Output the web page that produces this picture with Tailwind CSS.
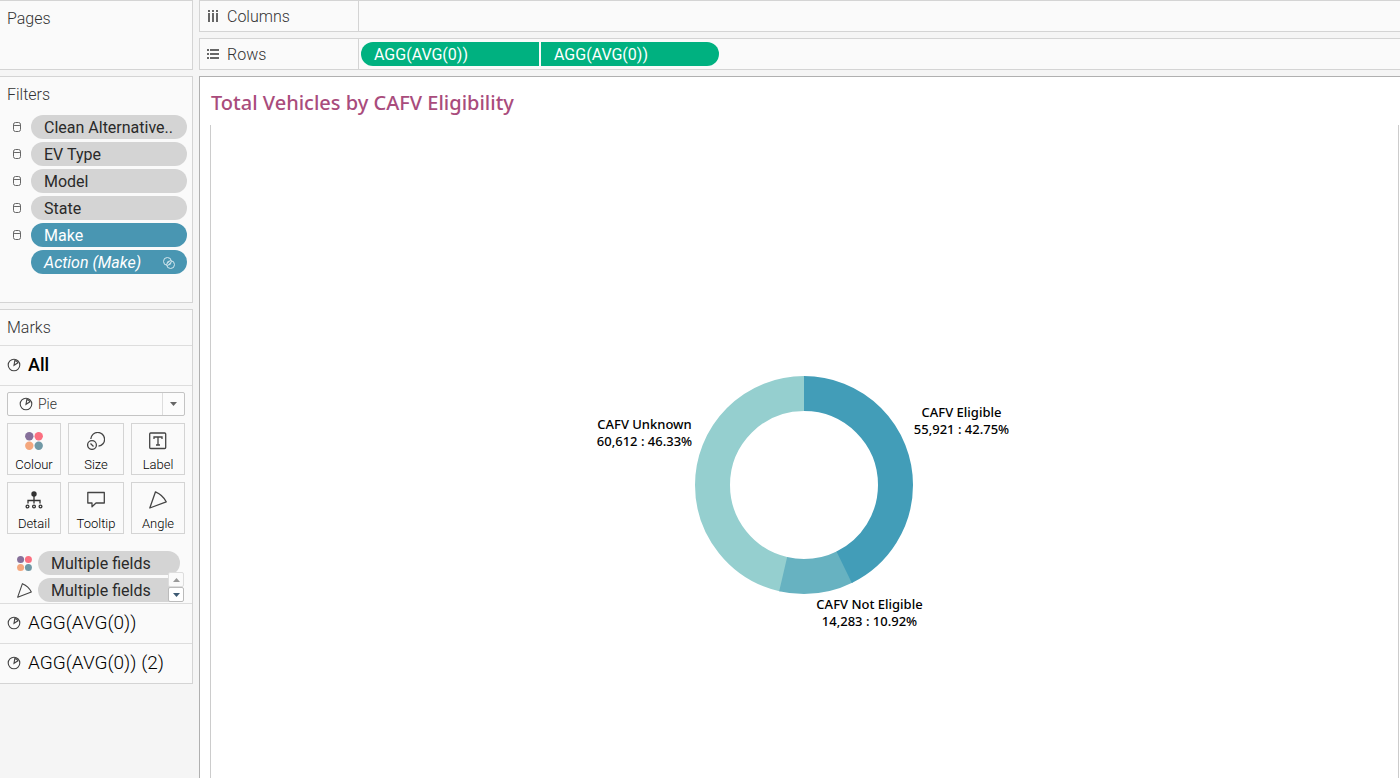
<!DOCTYPE html>
<html lang="en">
<head>
<meta charset="utf-8">
<meta name="viewport" content="width=device-width, initial-scale=1">
<title>Total Vehicles by CAFV Eligibility</title>
<script src="https://cdn.jsdelivr.net/npm/@tailwindcss/browser@4"></script>
</head>
<body class="flex h-screen gap-1.5 overflow-hidden bg-[#f5f5f5] font-['Roboto','Liberation_Sans',sans-serif] text-base text-[#333333]">

<!-- Shared icon shapes -->
<svg class="hidden" aria-hidden="true">
  <symbol id="pie" viewBox="0 0 14 14"><g fill="none" stroke="#444444"><circle cx="7" cy="7" r="5.8" stroke-width="1.1"/><path d="M7 7.300L7.800 2.600Q9.800 2.500 11 4.700Z" stroke-width="1.1"/></g></symbol>
  <symbol id="cylinder" viewBox="0 0 10 12"><g fill="none" stroke="#666666" stroke-width="1"><rect x="1.500" y="1.500" width="7" height="9" rx="2"/><path d="M1.500 3.500q0 1 1.500 1h4q1.500 0 1.500-1"/></g></symbol>
  <symbol id="dots" viewBox="0 0 18 18"><circle cx="4.300" cy="4.300" r="4.200" fill="#86709a"/><circle cx="13.700" cy="4.300" r="4.200" fill="#fb6f80"/><circle cx="4.300" cy="13.700" r="4.200" fill="#f4a77d"/><circle cx="13.700" cy="13.700" r="4.200" fill="#7098a5"/></symbol>
  <symbol id="angle" viewBox="0 0 18 18"><path d="M6.500 .8L.8 17L17.200 10.800Q14 4 6.500 .8Z" fill="none" stroke="#444444" stroke-width="1.300" stroke-linejoin="round"/></symbol>
</svg>

<aside class="flex w-[193px] shrink-0 flex-col gap-1.5" aria-label="Cards">
  <section class="h-[70px] border border-l-0 border-[#d4d4d4] bg-[#fafafa] px-[7px] pt-1.5">
    <h2 class="font-light">Pages</h2>
  </section>

  <section class="h-[227px] border border-l-0 border-[#d4d4d4] bg-[#fafafa] pt-1.5">
    <h2 class="px-[7px] font-light">Filters</h2>
    <ul class="mt-2 flex flex-col gap-[3px] pr-[5px] pl-3 text-[#2a2a2a]">
      <li class="flex items-center gap-[9px]"><svg class="h-3 w-2.5"><use href="#cylinder"/></svg><button class="h-6 flex-1 rounded-full bg-[#d4d4d4] px-[13px] pt-px text-left">Clean Alternative..</button></li>
      <li class="flex items-center gap-[9px]"><svg class="h-3 w-2.5"><use href="#cylinder"/></svg><button class="h-6 flex-1 rounded-full bg-[#d4d4d4] px-[13px] pt-px text-left">EV Type</button></li>
      <li class="flex items-center gap-[9px]"><svg class="h-3 w-2.5"><use href="#cylinder"/></svg><button class="h-6 flex-1 rounded-full bg-[#d4d4d4] px-[13px] pt-px text-left">Model</button></li>
      <li class="flex items-center gap-[9px]"><svg class="h-3 w-2.5"><use href="#cylinder"/></svg><button class="h-6 flex-1 rounded-full bg-[#d4d4d4] px-[13px] pt-px text-left">State</button></li>
      <li class="flex items-center gap-[9px]"><svg class="h-3 w-2.5"><use href="#cylinder"/></svg><button class="h-6 flex-1 rounded-full bg-[#4996b2] px-[13px] pt-px text-left text-white">Make</button></li>
      <li class="flex pl-[19px]"><button class="flex h-6 flex-1 items-center justify-between rounded-full bg-[#4996b2] pt-px pr-3 pl-[13px] text-left text-white italic">Action (Make)
        <svg class="h-3 w-3" viewBox="0 0 12 12" fill="none" stroke="#d5e8ef" stroke-width="1"><circle cx="4.400" cy="4.400" r="3.900"/><circle cx="7.600" cy="7.600" r="3.900"/><path d="M4.500 6.500l2-2M5.500 7.500l2-2" stroke-width=".7"/></svg></button></li>
    </ul>
  </section>

  <section class="border border-l-0 border-[#d4d4d4] bg-[#fafafa]">
    <h2 class="flex h-9 items-center border-b border-[#dddddd] px-[7px] font-light">Marks</h2>
    <button class="flex h-10 w-full items-center gap-[7px] border-b border-[#dddddd] px-[7px] pb-px text-lg font-medium text-black"><svg class="h-3.5 w-3.5"><use href="#pie"/></svg>All</button>

    <div class="relative mx-[7px] mt-1.5">
      <select aria-label="Mark type" class="block h-6 w-full appearance-none rounded-xs border border-[#c4c4c4] bg-white/40 pl-[30px] text-sm font-light text-[#333333]"><option>Pie</option></select>
      <svg class="pointer-events-none absolute top-[5px] left-3 h-3.5 w-3.5"><use href="#pie"/></svg>
      <span class="pointer-events-none absolute inset-y-px right-px flex w-[22px] items-center justify-center border-l border-[#dddddd]"><svg class="h-1 w-[7px]" viewBox="0 0 7 4"><path d="M0 0h7L3.500 4z" fill="#666666"/></svg></span>
    </div>

    <div class="mx-[7px] mt-[7px] grid grid-cols-[54px_56px_54px] justify-between gap-y-[7px] text-[13px] leading-4 text-black">
      <button class="flex h-[52px] flex-col items-center justify-between border border-[#d4d4d4] pt-2 pb-px font-light"><svg class="h-[18px] w-[18px]"><use href="#dots"/></svg>Colour</button>
      <button class="flex h-[52px] flex-col items-center justify-between border border-[#d4d4d4] pt-2 pb-px font-light"><svg class="h-[18px] w-[18px]" viewBox="0 0 18 18" fill="none" stroke="#444444" stroke-width="1.300"><path d="M3.800 7A6.900 6.900 0 1 1 11.500 14.200"/><circle cx="5" cy="13" r="4.400"/><path d="M3.500 11.500l3 3"/></svg>Size</button>
      <button class="flex h-[52px] flex-col items-center justify-between border border-[#d4d4d4] pt-2 pb-px font-light"><svg class="h-[18px] w-[18px]" viewBox="0 0 18 18" fill="none" stroke="#444444"><rect x=".7" y="1" width="16" height="15.500" rx="1" stroke-width="1.300"/><path d="M5 7V5h8v2M9 5v8M7 13h4" stroke-width="1.300"/></svg>Label</button>
      <button class="flex h-[52px] flex-col items-center justify-between border border-[#d4d4d4] pt-2 pb-px font-light"><svg class="h-[18px] w-[18px]" viewBox="0 0 18 18" fill="none" stroke="#333333" stroke-width="1.300"><circle cx="9" cy="3" r="2.700" fill="#333333" stroke="none"/><path d="M9 4v8.500M3 12.500V9.500h12v3"/><circle cx="2.500" cy="15.500" r="1.400"/><circle cx="9" cy="15.500" r="1.400"/><circle cx="15.500" cy="15.500" r="1.400"/></svg>Detail</button>
      <button class="flex h-[52px] flex-col items-center justify-between border border-[#d4d4d4] pt-2 pb-px font-light"><svg class="h-[18px] w-[18px]" viewBox="0 0 18 18" fill="none" stroke="#444444" stroke-width="1.300"><path d="M.8 1.500h16.500v10.500H9l-4 3.800V12H.8z" stroke-linejoin="round"/></svg>Tooltip</button>
      <button class="flex h-[52px] flex-col items-center justify-between border border-[#d4d4d4] pt-2 pb-px font-light"><svg class="h-[18px] w-[18px]"><use href="#angle"/></svg>Angle</button>
    </div>

    <div class="relative mt-[17px] border-b border-[#dddddd] pb-px">
      <ul class="flex flex-col gap-[3px] pr-3 pl-[17px] text-[#2a2a2a]">
        <li class="flex items-center gap-1.5"><svg class="h-[15px] w-[15px]"><use href="#dots"/></svg><button class="h-6 flex-1 rounded-full bg-[#d4d4d4] px-[13px] pt-px text-left">Multiple fields</button></li>
        <li class="flex items-center gap-1.5"><svg class="h-[15px] w-[15px]"><use href="#angle"/></svg><button class="h-6 flex-1 rounded-full bg-[#d4d4d4] px-[13px] pt-px text-left">Multiple fields</button></li>
      </ul>
      <div class="absolute right-2 bottom-px flex w-4 flex-col">
        <button aria-label="Scroll up" class="flex h-[15px] items-center justify-center rounded-xs border border-[#dddddd] bg-[#fafafa]"><svg class="h-1 w-[7px]" viewBox="0 0 7 4"><path d="M0 4h7L3.500 0z" fill="#999999"/></svg></button>
        <button aria-label="Scroll down" class="flex h-[15px] items-center justify-center rounded-xs border border-[#bbbbbb] bg-white"><svg class="h-1 w-[7px]" viewBox="0 0 7 4"><path d="M0 0h7L3.500 4z" fill="#3d5a73"/></svg></button>
      </div>
    </div>

    <button class="flex h-10 w-full items-center gap-[7px] border-b border-[#dddddd] px-[7px] pb-px text-[19px] font-light text-black"><svg class="h-3.5 w-3.5"><use href="#pie"/></svg>AGG(AVG(0))</button>
    <button class="flex h-[39px] w-full items-center gap-[7px] px-[7px] pb-px text-[19px] font-light text-black"><svg class="h-3.5 w-3.5"><use href="#pie"/></svg>AGG(AVG(0)) (2)</button>
  </section>
</aside>

<main class="flex min-w-0 flex-1 flex-col gap-1.5">
  <section class="flex h-8 shrink-0 border border-r-0 border-[#d4d4d4] bg-[#fafafa]">
    <h2 class="flex w-[159px] items-center gap-2 border-r border-[#d4d4d4] pt-px pl-[7px] font-light"><svg class="mb-0.5 h-3 w-3" viewBox="0 0 12 12" fill="#666666"><path d="M1 0h2v2H1zM5 0h2v2H5zM9 0h2v2H9zM1 3h2v9H1zM5 3h2v9H5zM9 3h2v9H9z"/></svg>Columns</h2>
  </section>
  <section class="flex h-8 shrink-0 border border-r-0 border-[#d4d4d4] bg-[#fafafa]">
    <h2 class="flex w-[159px] items-center gap-2 border-r border-[#d4d4d4] pt-px pl-[7px] font-light"><svg class="mb-0.5 h-3 w-3" viewBox="0 0 12 12" fill="#666666"><path d="M0 1h2v2H0zM0 5h2v2H0zM0 9h2v2H0zM3 1h9v2H3zM3 5h9v2H3zM3 9h9v2H3z"/></svg>Rows</h2>
    <div class="flex items-center gap-0.5 pl-0.5 text-white">
      <button class="h-6 w-[178px] rounded-l-full bg-[#00b180] px-[13px] pt-px text-left">AGG(AVG(0))</button>
      <button class="h-6 w-[178px] rounded-r-full bg-[#00b180] px-[13px] pt-px text-left">AGG(AVG(0))</button>
    </div>
  </section>

  <section class="flex min-h-0 flex-1 flex-col border-t border-l border-[#b0b0b0] bg-white pr-px pl-2.5 font-['Noto_Sans','Liberation_Sans',sans-serif]">
    <h1 class="flex h-12 shrink-0 items-center pt-1 pl-px text-xl font-medium text-[#a94c7c]">Total Vehicles by CAFV Eligibility</h1>
    <div class="flex flex-1 items-start justify-center border-x border-[#cccccc] pt-[251px] pr-0.5">
      <figure class="relative h-[218px] w-[218px] text-center text-[13px] leading-[17px] font-medium whitespace-nowrap text-black">
        <svg class="h-full w-full" viewBox="0 0 218 218" fill="none" stroke-width="35" role="img" aria-label="Vehicles by CAFV eligibility">
          <g transform="rotate(-90 109 109)">
            <circle cx="109" cy="109" r="91.500" stroke="#95cfcf" pathLength="100" stroke-dasharray="0 53.500 46.500"/>
            <circle cx="109" cy="109" r="91.500" stroke="#67b2c1" pathLength="100" stroke-dasharray="0 42.600 11.070 100"/>
            <circle cx="109" cy="109" r="91.500" stroke="#429db8" pathLength="100" stroke-dasharray="42.750 100"/>
          </g>
        </svg>
        <p class="absolute top-7 left-[267px] -translate-x-1/2">CAFV Eligible<br>55,921 : 42.75%</p>
        <p class="absolute top-10 left-[-50px] -translate-x-1/2">CAFV Unknown<br>60,612 : 46.33%</p>
        <p class="absolute top-[220px] left-[175px] -translate-x-1/2">CAFV Not Eligible<br>14,283 : 10.92%</p>
      </figure>
    </div>
  </section>
</main>
</body>
</html>
